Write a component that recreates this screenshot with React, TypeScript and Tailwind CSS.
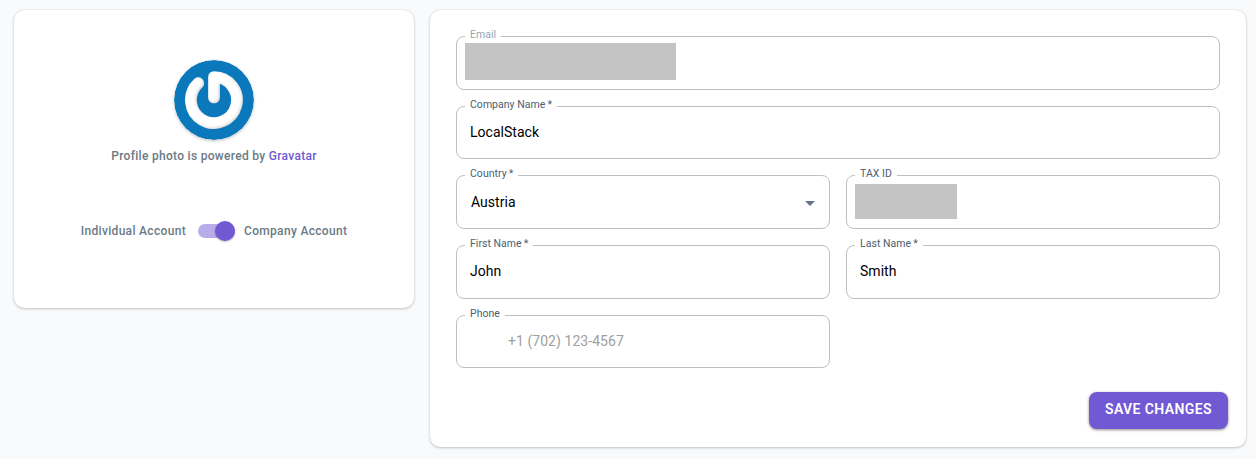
import type { ReactNode } from 'react';

type FieldProps = {
  label: string;
  height: string;
  required?: boolean;
  muted?: boolean;
  children?: ReactNode;
};

function Field({ label, height, required = false, muted = false, children }: FieldProps) {
  return (
    <div className={`relative flex items-center rounded-lg border border-[#c0c0c0] ${height}`}>
      <label
        className={`absolute -top-[9px] left-2 whitespace-nowrap bg-white px-[5px] text-[10.5px] leading-[14px] tracking-[0.03px] ${
          muted ? 'text-[#98a5b2]' : 'text-[#4c5e70]'
        }`}
      >
        {label}
        {required && '\u2009*'}
      </label>
      {children}
    </div>
  );
}

function Value({ children }: { children: ReactNode }) {
  return <span className="pb-0.5 pl-[13px] text-sm leading-5 tracking-[0.03px] text-black">{children}</span>;
}

function PowerAvatar() {
  return (
    <svg width="80" height="80" viewBox="0 0 80 80" className="rounded-full shadow-[0_1px_3px_rgba(0,0,0,0.25)]">
      <defs>
        <filter id="edge" filterUnits="userSpaceOnUse" x="0" y="0" width="80" height="80">
          <feGaussianBlur in="SourceAlpha" stdDeviation="1.8" result="b" />
          <feOffset in="b" dx="-1" dy="-1" result="o" />
          <feComposite in="SourceAlpha" in2="o" operator="out" result="c" />
          <feFlood floodColor="#777777" floodOpacity="0.45" />
          <feComposite in2="c" operator="in" result="s" />
          <feMerge>
            <feMergeNode in="SourceGraphic" />
            <feMergeNode in="s" />
          </feMerge>
        </filter>
      </defs>
      <circle cx="40" cy="40" r="40" fill="#0b78bb" />
      <path
        d="M40 37.5V17A23 23 0 1 1 24.2 23.2"
        fill="none"
        stroke="#ffffff"
        strokeWidth="11.7"
        strokeLinecap="round"
        strokeLinejoin="round"
        filter="url(#edge)"
      />
    </svg>
  );
}

export default function App() {
  return (
    <main className="flex h-[459px] items-start gap-4 bg-[#f9fafc] pt-2.5 pl-3.5 font-['Roboto',sans-serif]">
      <section className="flex h-[298px] w-[400px] shrink-0 flex-col items-center rounded-[10px] bg-white pt-[50px] shadow-[0_0_1px_rgba(0,0,0,0.2),0_1px_3px_rgba(0,0,0,0.2)]">
        <PowerAvatar />
        <p className="mt-1.5 text-xs leading-5 font-medium tracking-[0.3px] text-[#6b7a86]">
          Profile photo is powered by <a className="text-[#7059d3]">Gravatar</a>
        </p>
        <div className="mt-[55px] flex items-center text-xs leading-5 font-medium tracking-[0.32px] text-[#6b7a86]">
          <span>Individual Account</span>
          <span className="mr-[9px] ml-3 flex h-[14px] w-[37px] items-center justify-end rounded-full bg-[#b8adea]">
            <span className="size-5 shrink-0 rounded-full bg-[#7059d3] shadow-[0_1px_2px_rgba(0,0,0,0.25)]" />
          </span>
          <span>Company Account</span>
        </div>
      </section>

      <section className="flex h-[437px] w-[816px] shrink-0 flex-col rounded-[10px] bg-white px-[26px] pt-[26px] shadow-[0_0_1px_rgba(0,0,0,0.2),0_1px_3px_rgba(0,0,0,0.2)]">
        <div className="grid grid-cols-2 gap-4">
          <div className="col-span-2">
            <Field label="Email" height="h-[54px]" muted>
              <div className="mb-[3px] ml-2 h-[37px] w-[211px] bg-[#c4c4c4]" />
            </Field>
          </div>
          <div className="col-span-2">
            <Field label="Company Name" required height="h-[53px]">
              <Value>LocalStack</Value>
            </Field>
          </div>
          <Field label="Country" required height="h-[54px]">
            <span className="pl-3.5 text-sm leading-5 tracking-[0.03px] text-black">Austria</span>
            <svg className="mt-0.5 mr-3.5 ml-auto" width="10" height="5" viewBox="0 0 10 5">
              <path d="M0 0H10L5 5Z" fill="#65748b" />
            </svg>
          </Field>
          <Field label="TAX ID" height="h-[54px]">
            <div className="mb-px ml-2 h-[35px] w-[102px] bg-[#c4c4c4]" />
          </Field>
          <Field label="First Name" required height="h-[54px]">
            <Value>John</Value>
          </Field>
          <Field label="Last Name" required height="h-[54px]">
            <Value>Smith</Value>
          </Field>
          <Field label="Phone" height="h-[53px]">
            <span className="pb-px pl-[51px] text-sm leading-5 tracking-[0.05px] text-[#a0a0a0]">+1 (702) 123-4567</span>
          </Field>
        </div>
        <button className="mt-6 -mr-2 flex h-[37px] w-[139px] items-center justify-center self-end rounded-lg bg-[#7059d3] pb-[3px] text-sm font-semibold tracking-[0.4px] text-white shadow-[0_1px_3px_rgba(0,0,0,0.45)]">
          SAVE CHANGES
        </button>
      </section>
    </main>
  );
}
